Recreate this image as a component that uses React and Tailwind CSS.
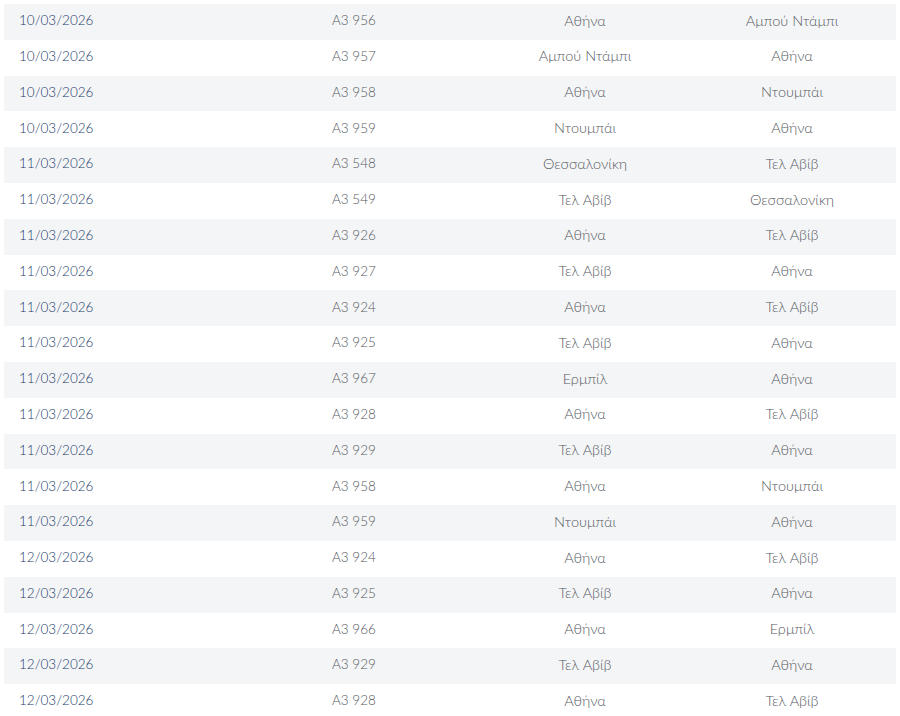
import React from "react";

const flights = [
  ["10/03/2026", "A3 956", "Αθήνα", "Αμπού Ντάμπι"],
  ["10/03/2026", "A3 957", "Αμπού Ντάμπι", "Αθήνα"],
  ["10/03/2026", "A3 958", "Αθήνα", "Ντουμπάι"],
  ["10/03/2026", "A3 959", "Ντουμπάι", "Αθήνα"],
  ["11/03/2026", "A3 548", "Θεσσαλονίκη", "Τελ Αβίβ"],
  ["11/03/2026", "A3 549", "Τελ Αβίβ", "Θεσσαλονίκη"],
  ["11/03/2026", "A3 926", "Αθήνα", "Τελ Αβίβ"],
  ["11/03/2026", "A3 927", "Τελ Αβίβ", "Αθήνα"],
  ["11/03/2026", "A3 924", "Αθήνα", "Τελ Αβίβ"],
  ["11/03/2026", "A3 925", "Τελ Αβίβ", "Αθήνα"],
  ["11/03/2026", "A3 967", "Ερμπίλ", "Αθήνα"],
  ["11/03/2026", "A3 928", "Αθήνα", "Τελ Αβίβ"],
  ["11/03/2026", "A3 929", "Τελ Αβίβ", "Αθήνα"],
  ["11/03/2026", "A3 958", "Αθήνα", "Ντουμπάι"],
  ["11/03/2026", "A3 959", "Ντουμπάι", "Αθήνα"],
  ["12/03/2026", "A3 924", "Αθήνα", "Τελ Αβίβ"],
  ["12/03/2026", "A3 925", "Τελ Αβίβ", "Αθήνα"],
  ["12/03/2026", "A3 966", "Αθήνα", "Ερμπίλ"],
  ["12/03/2026", "A3 929", "Τελ Αβίβ", "Αθήνα"],
  ["12/03/2026", "A3 928", "Αθήνα", "Τελ Αβίβ"],
];

const App = () => {
  return (
    <div className="h-[716px] overflow-hidden bg-white pt-1 px-1 font-['Lato','Noto_Sans',sans-serif] text-[13.5px] font-light leading-none">
      {flights.map(([date, code, from, to], index) => (
        <div
          key={index}
          className={`grid grid-cols-[328px_150px_206px_208px] items-center h-[35.8px] pb-[2px] ${
            index % 2 === 0 ? "bg-[#f4f5f7]" : "bg-white"
          }`}
        >
          <div className="pl-[15px] text-[#233a69]">{date}</div>
          <div className="text-[#55595f]">{code}</div>
          <div className="text-center text-[14.5px] text-[#55595f]">{from}</div>
          <div className="text-center text-[14.5px] text-[#55595f]">{to}</div>
        </div>
      ))}
    </div>
  );
};

export default App;
